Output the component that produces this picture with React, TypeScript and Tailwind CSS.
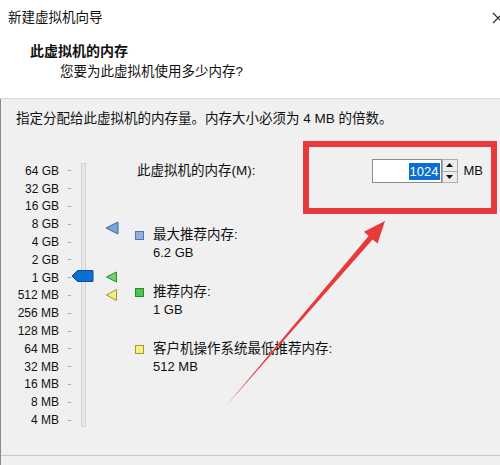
const font = { fontFamily: '"Liberation Sans", "Noto Sans CJK SC", sans-serif' };

const scale = ['64 GB', '32 GB', '16 GB', '8 GB', '4 GB', '2 GB', '1 GB', '512 MB', '256 MB', '128 MB', '64 MB', '32 MB', '16 MB', '8 MB', '4 MB'];

const legend = [
  { label: '最大推荐内存:', value: '6.2 GB', box: 'bg-[#8fb0e0] border-[#5577ad]' },
  { label: '推荐内存:', value: '1 GB', box: 'bg-[#4fc24f] border-[#2a8a2a]' },
  { label: '客户机操作系统最低推荐内存:', value: '512 MB', box: 'bg-[#f6ee86] border-[#a79a33]' },
];

function Slider() {
  return (
    <div className="relative w-[134px] shrink-0 pt-[3px]">
      <div className="flex">
        <div className="flex flex-col">
          {scale.map(s => (
            <div key={s} className="flex h-[17.8px] items-center">
              <span className="w-[58px] text-right text-[12px] leading-none text-[#111]">{s}</span>
              <span className="ml-[9px] h-px w-[3px] bg-[#a8a8a8]" />
            </div>
          ))}
        </div>
        <div className="ml-[10px] mt-[1px] mb-[2px] w-[5px] self-stretch border border-[#d4d4d4] bg-[#e8e8e8]" />
      </div>
      {/* thumb and markers */}
      <svg className="absolute left-0 top-0" width="134" height="270" viewBox="0 159 134 270">
        <polygon points="71,276 76.5,270.5 92,270.5 92,281.5 76.5,281.5" fill="#0a6fd1" stroke="#0b4f99" strokeWidth="1" />
        <polygon points="105,228 117,222 117,234" fill="#7aa3d6" stroke="#3c6aa3" strokeWidth="1" />
        <polygon points="105.5,277 115.5,272 115.5,282" fill="#6fd26f" stroke="#2d8a2d" strokeWidth="1" />
        <polygon points="105.5,295 115.5,289.5 115.5,300.5" fill="#f3ec87" stroke="#a49530" strokeWidth="1" />
      </svg>
    </div>
  );
}

function MemoryInput() {
  return (
    <div className="ml-auto flex items-center">
      <div className="flex h-[24px] w-[70px] items-center justify-end border border-[#8c8c8c] bg-white pr-[1px]">
        <span className="bg-[#0a6fd1] px-[1px] text-[13px] leading-[17px] text-white">1024</span>
      </div>
      <div className="flex h-[24px] w-[16px] flex-col">
        <div className="flex flex-1 items-center justify-center border border-[#adadad] bg-[#ececec]">
          <svg width="7" height="4" viewBox="0 0 7 4"><polygon points="0,4 3.5,0 7,4" fill="#111" /></svg>
        </div>
        <div className="flex flex-1 items-center justify-center border border-t-0 border-[#adadad] bg-[#ececec]">
          <svg width="7" height="4" viewBox="0 0 7 4"><polygon points="0,0 7,0 3.5,4" fill="#111" /></svg>
        </div>
      </div>
      <span className="ml-[6px] text-[13px] text-[#111]">MB</span>
    </div>
  );
}

export default function App() {
  return (
    <div className="relative flex h-[465px] w-[500px] flex-col overflow-hidden bg-[#f0f0f0] text-[#111]" style={font}>
      {/* Header */}
      <header className="relative h-[99px] shrink-0 border-b border-[#d9d9d9] bg-white">
        <div className="pl-[8px] pt-[9px] text-[13.5px] leading-[18px]">新建虚拟机向导</div>
        <svg className="absolute right-[-4px] top-[12px]" width="12" height="12" viewBox="0 0 12 12">
          <path d="M1 1 L11 11 M11 1 L1 11" stroke="#222" strokeWidth="1.1" />
        </svg>
        <div className="mt-[14px] pl-[30px] text-[14px] font-bold leading-[20px]">此虚拟机的内存</div>
        <div className="mt-[2px] pl-[60px] text-[13.5px] leading-[18px]">您要为此虚拟机使用多少内存?</div>
      </header>

      {/* Body */}
      <div className="flex flex-1 flex-col border-l border-[#8a8a8a]">
        <p className="pl-[15px] pt-[11px] text-[13.5px] leading-[18px]">指定分配给此虚拟机的内存量。内存大小必须为 4 MB 的倍数。</p>

        <div className="mt-[31px] flex">
          <Slider />
          <div className="flex flex-1 flex-col pr-[17px]">
            <div className="flex h-[24px] items-center">
              <span className="ml-[2px] text-[13.5px]">此虚拟机的内存(M):</span>
              <MemoryInput />
            </div>
            <div className="mt-[43px] flex flex-col gap-[21px]">
              {legend.map(l => (
                <div key={l.label} className="flex">
                  <div className="flex h-[18px] items-center">
                    <span className={`h-[9px] w-[9px] border ${l.box}`} />
                  </div>
                  <div className="ml-[9px] flex flex-col text-[13.5px] leading-[18px]">
                    <span>{l.label}</span>
                    <span className="text-[13px]">{l.value}</span>
                  </div>
                </div>
              ))}
            </div>
          </div>
        </div>

        <div className="mt-auto h-[10px] border-t border-[#c9c9c9]" />
      </div>

      {/* annotation: red box and arrow */}
      <div className="absolute left-[303px] top-[141px] h-[73px] w-[194px] border-[6px] border-[#e8393b]" />
      <svg className="absolute left-0 top-0" width="500" height="465" viewBox="0 0 500 465">
        <polygon points="385,221 377.5,243.6 372.6,239.6 226,406 368.6,236 363.9,231.8" fill="#e8393b" />
      </svg>
    </div>
  );
}
